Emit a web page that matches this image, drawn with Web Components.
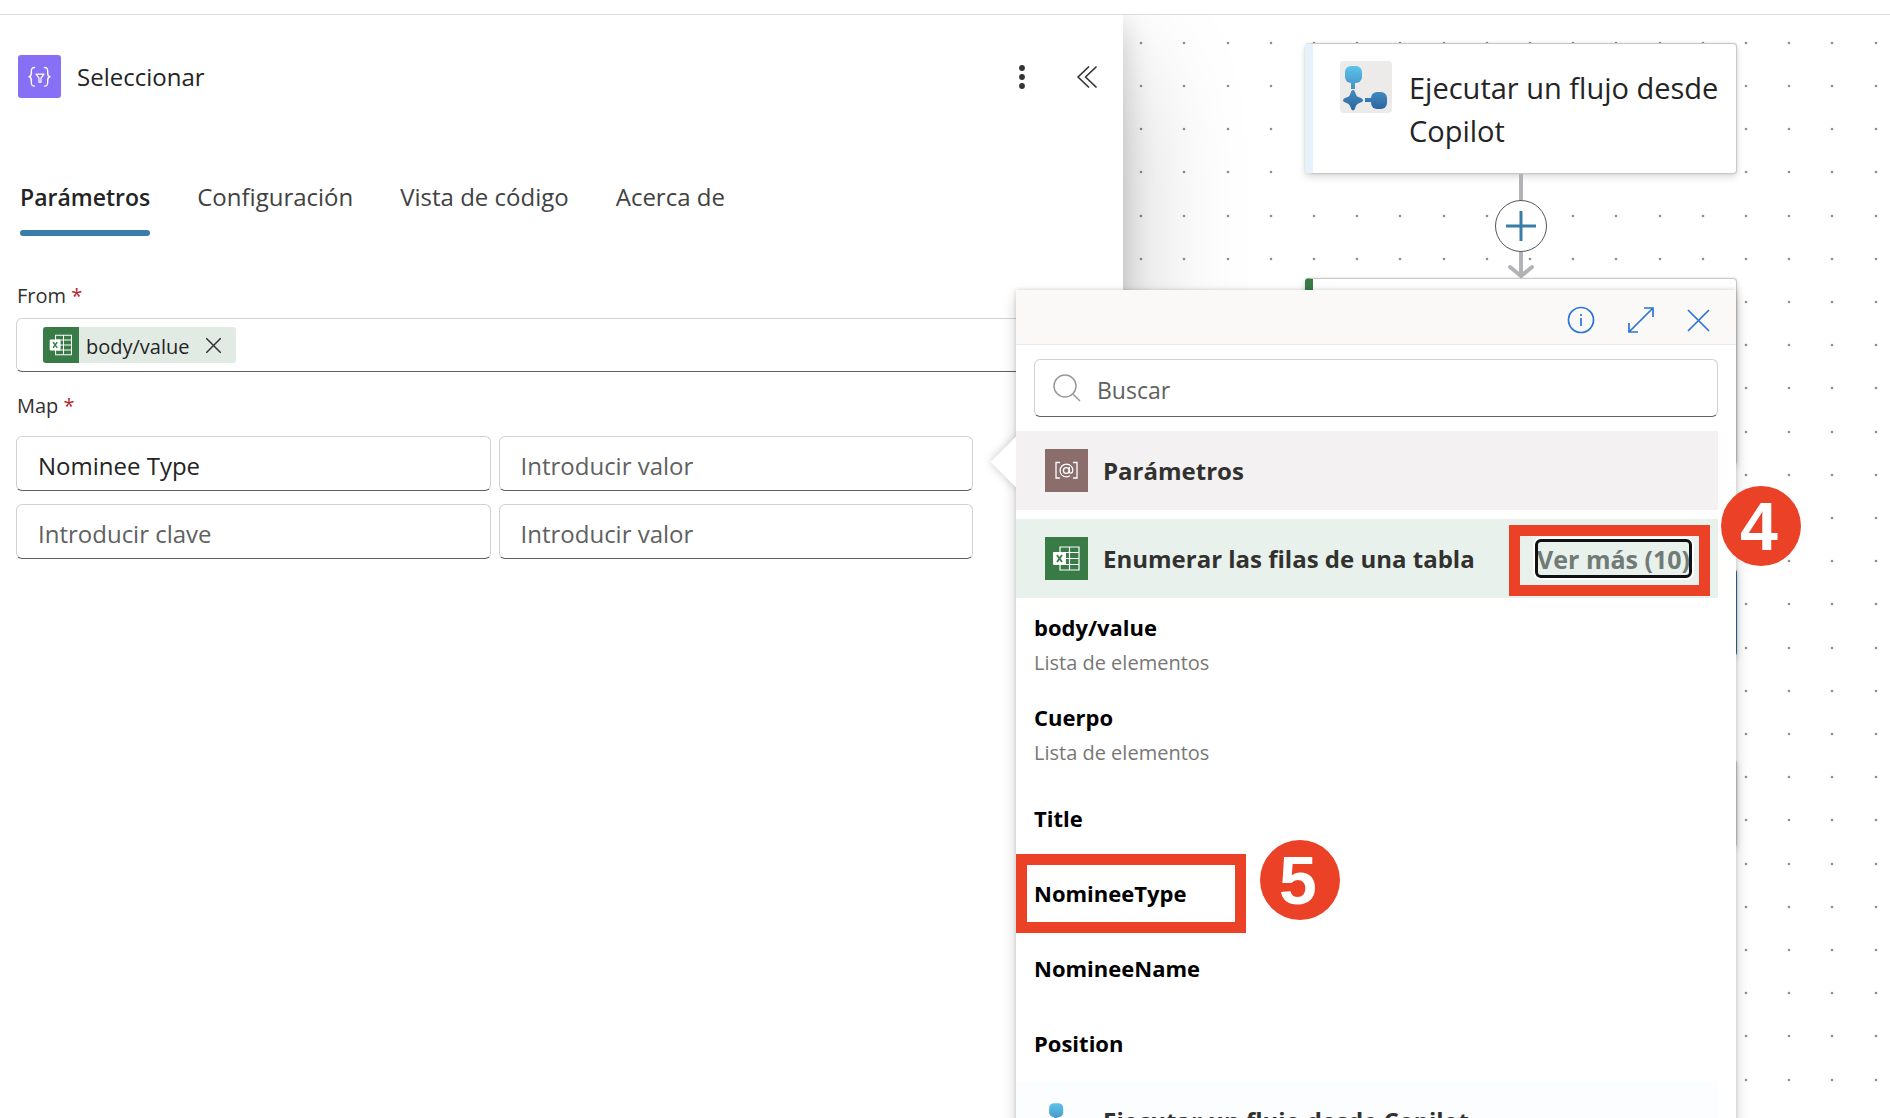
<!DOCTYPE html>
<html lang="es">
<head>
<meta charset="utf-8">
<meta name="viewport" content="width=device-width, initial-scale=1">
<title>Seleccionar</title>
<style>
  html, body { margin: 0; height: 100%; }
  body { overflow: hidden; background: #fff; font-family: "Open Sans", "Noto Sans", sans-serif; color: #242424; }
</style>
</head>
<body>
<flow-designer></flow-designer>

<script>
const define = (name, html, setup) => {
  const template = document.createElement('template');
  template.innerHTML = '<style>*, :host { box-sizing: border-box; } button, input { font: inherit; color: inherit; } button { border: 0; padding: 0; background: none; cursor: pointer; } svg { display: block; }</style>' + html;
  customElements.define(name, class extends HTMLElement {
    constructor() {
      super();
      this.attachShadow({ mode: 'open' }).append(template.content.cloneNode(true));
    }
    connectedCallback() { if (setup) setup(this, this.shadowRoot); }
  });
};

const icons = {
  select: `<svg viewBox="0 0 43 43" fill="none" stroke="#fff" stroke-linecap="round" stroke-linejoin="round">
    <rect width="43" height="43" rx="3" fill="#876ff6" stroke="none"/>
    <path stroke-width="1.4" d="M16.5 12.5c-3 0-3.200 1.500-3.200 4v2c0 2-.8 3-2.300 3.300 1.500.3 2.300 1.300 2.300 3.300v2c0 2.500.2 4 3.200 4M26.500 12.500c3 0 3.200 1.500 3.200 4v2c0 2 .8 3 2.300 3.300-1.500.3-2.300 1.300-2.300 3.300v2c0 2.500-.2 4-3.200 4"/>
    <path stroke-width="1.200" d="M18 19.200h8l-3 4v4h-2v-4z"/></svg>`,
  excel: `<svg viewBox="0 0 43 43"><rect width="43" height="43" fill="#387b47"/>
    <path d="M15 10h19v23H15z M15 15.500h19M15 21.500h19M15 27.500h19M24.500 10v23" fill="none" stroke="#fff" stroke-width="1.200"/>
    <rect x="8" y="15" width="13" height="13" rx="1" fill="#fff"/>
    <path d="M12 18l5 7M17 18l-5 7" stroke="#387b47" stroke-width="1.800"/></svg>`,
  param: `<svg viewBox="0 0 43 43" fill="none" stroke="#fff" stroke-width="1.300" stroke-linecap="round">
    <rect width="43" height="43" fill="#8b6d6c" stroke="none"/>
    <path d="M14.500 13.500h-3.500v15.500h3.500M28.500 13.500h3.500v15.500h-3.500"/>
    <circle cx="21.300" cy="21.500" r="2.900"/>
    <path d="M24.300 18.500v4c0 2.600 3.500 2.200 3.500-1.200 0-3.600-2.800-6.100-6.300-6.100-3.700 0-6.400 2.800-6.400 6.300 0 3.700 2.700 6.300 6.400 6.300 1.200 0 2.300-.3 3.100-.8"/></svg>`,
  flow: `<svg viewBox="0 0 52 52"><defs><linearGradient id="fg" x1="0" y1="0" x2="0" y2="52" gradientUnits="userSpaceOnUse"><stop offset=".1" stop-color="#5cc3e8"/><stop offset=".5" stop-color="#4694c8"/><stop offset=".95" stop-color="#2b639d"/></linearGradient></defs>
    <rect class="tile" width="52" height="52" rx="4"/>
    <g fill="url(#fg)"><rect x="5" y="5" width="17" height="17" rx="6"/><rect x="11" y="21" width="4" height="7"/>
    <path d="M13 29c1.500 0 2 2 2.800 4.200.7 1.700 1.500 2.500 3.200 3.100 2 .8 4 1.500 4 3s-2 2.100-4 2.900c-1.700.6-2.500 1.400-3.200 3.100C15 47.500 14.500 49.500 13 49.500s-2-2-2.800-4.200c-.7-1.700-1.500-2.500-3.200-3.100-2-.8-4-1.400-4-2.900s2-2.200 4-3c1.700-.6 2.500-1.400 3.200-3.100C11 31 11.500 29 13 29z"/>
    <rect x="25" y="37" width="7" height="4"/><rect x="31" y="31" width="16" height="17" rx="6"/></g></svg>`
};

define('app-icon', `<style>
  :host { display: block; flex: none; width: 43px; height: 43px; }
  div, svg { width: 100%; height: 100%; }
  .tile { fill: var(--tile, none); }
</style><div></div>`, (el, root) => { root.querySelector('div').innerHTML = icons[el.getAttribute('name')]; });

define('map-field', `<style>
  :host { display: block; min-width: 0; }
  label { display: block; }
  input { display: block; width: 100%; height: 55px; padding: 3px 21px 0; border: 1px solid #d1d1d1; border-bottom-color: #616161; border-radius: 6px; background: #fff; font-size: 24px; outline: 0; }
  input::placeholder { color: #616161; opacity: 1; }
</style><label><input type="text"></label>`, (el, root) => {
  const input = root.querySelector('input');
  input.placeholder = el.getAttribute('placeholder') || '';
  input.value = el.getAttribute('value') || '';
  input.setAttribute('aria-label', el.getAttribute('name'));
});

define('token-chip', `<style>
  :host { display: flex; align-items: center; height: 36px; border-radius: 3px; overflow: hidden; background: #e1ebe3; font-size: 20px; }
  app-icon { width: 36px; height: 36px; }
  .name { padding: 2px 16px 0 7px; }
  button { padding-right: 15px; }
</style><app-icon name="excel"></app-icon><span class="name"><slot></slot></span>
<button aria-label="Quitar"><svg width="15" height="15" stroke="#333" stroke-width="1.500"><path d="M0 0l15 15M15 0L0 15"/></svg></button>`);

define('panel-tab', `<style>
  :host { display: block; }
  button { display: flex; flex-direction: column; height: 57px; font-size: 24px; line-height: 36px; color: #424242; white-space: nowrap; }
  :host([selected]) button { justify-content: space-between; font-weight: 600; font-size: 23px; color: #242424; }
  :host([selected]) button::after { content: ""; width: 100%; height: 6px; border-radius: 3px; background: #387ea8; }
</style><button role="tab"><slot></slot></button>`, (el, root) => {
  root.querySelector('button').setAttribute('aria-selected', el.hasAttribute('selected'));
});

define('config-panel', `<style>
  :host { display: block; background: #fff; padding: 40px 16px 0; box-shadow: 0 51px 115px rgba(0,0,0,.22), 0 10px 29px rgba(0,0,0,.18); }
  header { display: flex; align-items: center; gap: 16px; padding: 0 4px 0 2px; }
  h1 { flex: 1; margin: 0; font-size: 24px; line-height: 36px; font-weight: 400; }
  header button { display: grid; place-items: center; width: 32px; height: 32px; }
  .tools { display: flex; gap: 33px; }
  .tabs { display: flex; gap: 47px; margin: 81px 4px 0; }
  .label { display: block; font-size: 20px; line-height: 28px; color: #323130; }
  .label b { font-weight: 400; color: #b3262b; }
  .from { display: flex; align-items: center; height: 54px; padding-left: 26px; border: 1px solid #d1d1d1; border-bottom-color: #616161; border-radius: 6px; }
  .first { margin: 46px 1px 8px; }
  .second { margin: 20px 1px 16px; }
  .map { display: grid; grid-template-columns: 1fr 1fr; gap: 13px 8px; margin-right: 134px; }
</style>
<header>
  <app-icon name="select"></app-icon>
  <h1>Seleccionar</h1>
  <div class="tools">
    <button aria-label="Más opciones"><svg width="8" height="26" fill="#333"><circle cx="4" cy="4" r="2.900"/><circle cx="4" cy="13" r="2.900"/><circle cx="4" cy="22" r="2.900"/></svg></button>
    <button aria-label="Contraer"><svg width="20" height="22" fill="none" stroke="#333" stroke-width="1.700" stroke-linecap="round" stroke-linejoin="round"><path d="M11.500 1L1 11l10.500 10M19 1L8.500 11 19 21"/></svg></button>
  </div>
</header>
<div class="tabs" role="tablist">
  <panel-tab selected>Parámetros</panel-tab>
  <panel-tab>Configuración</panel-tab>
  <panel-tab>Vista de código</panel-tab>
  <panel-tab>Acerca de</panel-tab>
</div>
<span class="label first" id="from">From <b>*</b></span>
<div class="from" role="group" aria-labelledby="from"><token-chip>body/value</token-chip></div>
<span class="label second" id="map">Map <b>*</b></span>
<div class="map" role="group" aria-labelledby="map">
  <map-field name="Clave 1" value="Nominee Type"></map-field>
  <map-field name="Valor 1" placeholder="Introducir valor"></map-field>
  <map-field name="Clave 2" placeholder="Introducir clave"></map-field>
  <map-field name="Valor 2" placeholder="Introducir valor"></map-field>
</div>`);

define('flow-node', `<style>
  :host { display: flex; gap: 17px; padding: 17px 12px 0 27px; border: 1px solid #c8c8c8; border-left: 8px solid var(--accent, #e7f1fc); border-radius: 4px; background: #fff; box-shadow: 0 3px 7px rgba(0,0,0,.14), 0 0 2px rgba(0,0,0,.12); font-size: 29px; line-height: 43px; }
  :host([selected]) { border: 3px solid #256a94; }
  .text { padding-top: 5px; }
</style><slot name="icon"></slot><div class="text"><slot></slot></div>`);

define('flow-edge', `<style>
  :host { display: flex; flex-direction: column; align-items: center; height: 104px; }
  .line { width: 4px; height: 26px; background: #b3b3b7; }
  button { display: grid; place-items: center; width: 52px; height: 52px; border: 1px solid #555; border-radius: 50%; background: #fff; }
</style><div class="line"></div>
<button aria-label="Insertar paso"><svg width="30" height="30" stroke="#387ea8" stroke-width="3"><path d="M0 15h30M15 0v30"/></svg></button>
<svg width="28" height="26" fill="none" stroke="#b3b3b7" stroke-width="4" stroke-linecap="round" stroke-linejoin="round"><path d="M14 0v23M3 15l11 9 11-9"/></svg>`);

define('flow-canvas', `<style>
  :host { display: grid; background: #fff; overflow: hidden; }
  .grid, .nodes { grid-area: 1 / 1; }
  .grid { width: 100%; height: 100%; }
  .nodes { display: flex; flex-direction: column; padding: 28px 0 0 182px; width: 614px; }
  flow-node, flow-edge { flex: none; }
  .trigger { height: 131px; }
  .tall { height: 187px; --accent: #387b47; }
  .short { height: 87px; }
  .trigger app-icon { width: 52px; height: 52px; --tile: #edebe9; }
</style>
<svg class="grid"><defs><pattern id="dots" width="216" height="216" patternUnits="userSpaceOnUse"></pattern></defs><rect width="100%" height="100%" fill="url(#dots)"/></svg>
<div class="nodes">
  <flow-node class="trigger"><app-icon slot="icon" name="flow"></app-icon>Ejecutar un flujo desde Copilot</flow-node>
  <flow-edge></flow-edge>
  <flow-node class="tall"></flow-node>
  <flow-edge></flow-edge>
  <flow-node class="short" selected></flow-node>
  <flow-edge></flow-edge>
  <flow-node class="short"></flow-node>
</div>`, (el, root) => {
  const steps = [18, 61, 105, 148, 191], rows = [28, 71, 114, 157, 201];
  root.querySelector('pattern').innerHTML = rows.map(y => steps.map(x => `<circle cx="${x}" cy="${y}" r="1.300" fill="#8f8f8f"/>`).join('')).join('');
});

define('token-section', `<style>
  :host { display: flex; align-items: center; gap: 15px; height: 79px; padding: 0 26px 0 29px; margin-right: 18px; background: var(--tint); font-size: 24px; font-weight: 700; color: #323130; }
  .title { flex: 1; white-space: nowrap; }
</style><slot name="icon"></slot><span class="title"><slot></slot></span><slot name="action"></slot>`);

define('token-item', `<style>
  :host { display: block; }
  button { display: block; width: 100%; height: 75px; padding: 0 18px; text-align: left; line-height: 36px; }
  :host([detail]) button { height: 90px; }
  b { display: block; font-size: 22px; color: #000; }
  span { display: block; font-size: 20px; color: #797775; }
</style><button><b><slot></slot></b></button>`, (el, root) => {
  if (el.hasAttribute('detail')) {
    const span = document.createElement('span');
    span.textContent = el.getAttribute('detail');
    root.querySelector('button').append(span);
  }
});

define('step-mark', `<style>
  :host { position: absolute; border: 11px solid #ea4127; pointer-events: none; }
  span { position: absolute; display: grid; place-items: center; width: 80px; height: 80px; padding-right: 4px; border-radius: 50%; background: #ea4127; color: #fff; font: 700 68px/80px "Liberation Sans", Arial, sans-serif; left: var(--badge-x); top: var(--badge-y); }
</style><span><slot></slot></span>`);

define('token-picker', `<style>
  :host { display: block; background: #fff; box-shadow: 0 6px 14px rgba(0,0,0,.18), 0 0 4px rgba(0,0,0,.16); }
  .beak { position: absolute; left: -18px; top: 154px; width: 36px; height: 36px; transform: rotate(45deg); background: #fff; box-shadow: 0 0 10px rgba(0,0,0,.22); }
  .body { position: relative; background: #fff; }
  header { display: flex; justify-content: flex-end; align-items: center; gap: 33px; height: 55px; padding: 6px 26px 0; background: #faf9f8; border-bottom: 1px solid #e8e8e8; }
  header svg { fill: none; stroke: #2b74d6; stroke-width: 1.700; }
  .search { display: flex; align-items: center; gap: 16px; height: 58px; margin: 14px 18px; padding: 0 18px; border: 1px solid #d1d1d1; border-bottom-color: #616161; border-radius: 6px; }
  .search input { flex: 1; min-width: 0; height: 50px; border: 0; padding: 3px 0 0; outline: 0; background: none; font-size: 23px; }
  .search input::placeholder { color: #616161; opacity: 1; }
  token-section + token-section { margin-top: 9px; }
  .more { width: 157px; height: 39px; border-radius: 6px; outline: 3px solid #111; outline-offset: -3px; box-shadow: 0 0 0 2px #fff; background: none; font-weight: 700; font-size: 25px; line-height: 36px; color: #717a75; white-space: nowrap; }
  .items { padding: 2px 0 1px; }
  .a { left: 493px; top: 235px; width: 201px; height: 71px; --badge-x: 201px; --badge-y: -50px; }
  .b { left: 0; top: 564px; width: 230px; height: 79px; --badge-x: 233px; --badge-y: -25px; }
</style>
<div class="beak"></div>
<div class="body">
  <header>
    <button aria-label="Información"><svg width="28" height="28"><circle cx="14" cy="14" r="12.500"/><path d="M14 12v8M14 8v2"/></svg></button>
    <button aria-label="Expandir"><svg width="26" height="26"><path d="M1 25L25 1M16 1h9v9M1 16v9h9"/></svg></button>
    <button aria-label="Cerrar"><svg width="23" height="23"><path d="M1 1l21 21M22 1L1 22"/></svg></button>
  </header>
  <label class="search"><svg width="28" height="28" fill="none" stroke="#999" stroke-width="1.500"><circle cx="12" cy="12" r="11"/><path d="M20 20l7 7"/></svg><input type="text" aria-label="Buscar" placeholder="Buscar"></label>
  <token-section style="--tint:#f3f1f2"><app-icon slot="icon" name="param"></app-icon>Parámetros</token-section>
  <token-section style="--tint:#e8f1ec"><app-icon slot="icon" name="excel"></app-icon>Enumerar las filas de una tabla<button slot="action" class="more">Ver más (10)</button></token-section>
  <div class="items">
    <token-item detail="Lista de elementos">body/value</token-item>
    <token-item detail="Lista de elementos">Cuerpo</token-item>
    <token-item>Title</token-item>
    <token-item>NomineeType</token-item>
    <token-item>NomineeName</token-item>
    <token-item>Position</token-item>
  </div>
  <token-section style="--tint:#fbfdff"><app-icon slot="icon" name="flow"></app-icon>Ejecutar un flujo desde Copilot</token-section>
  <step-mark class="a">4</step-mark>
  <step-mark class="b">5</step-mark>
</div>`);

define('flow-designer', `<style>
  :host { display: flex; flex-direction: column; height: 100vh; overflow: hidden; }
  .bar { flex: none; height: 15px; border-bottom: 1px solid #dcdcdc; background: #fff; }
  main { flex: 1; min-height: 0; display: flex; overflow: hidden; }
  .side { position: relative; z-index: 1; flex: 1123 1 0; min-width: 0; display: flex; }
  config-panel { flex: 1; min-width: 0; }
  flow-canvas { flex: 767 1 0; min-width: 0; }
  token-picker { position: absolute; top: 275px; right: -613px; width: 720px; }
</style>
<div class="bar"></div>
<main>
  <div class="side"><config-panel></config-panel><token-picker></token-picker></div>
  <flow-canvas></flow-canvas>
</main>`);
</script>
</body>
</html>
